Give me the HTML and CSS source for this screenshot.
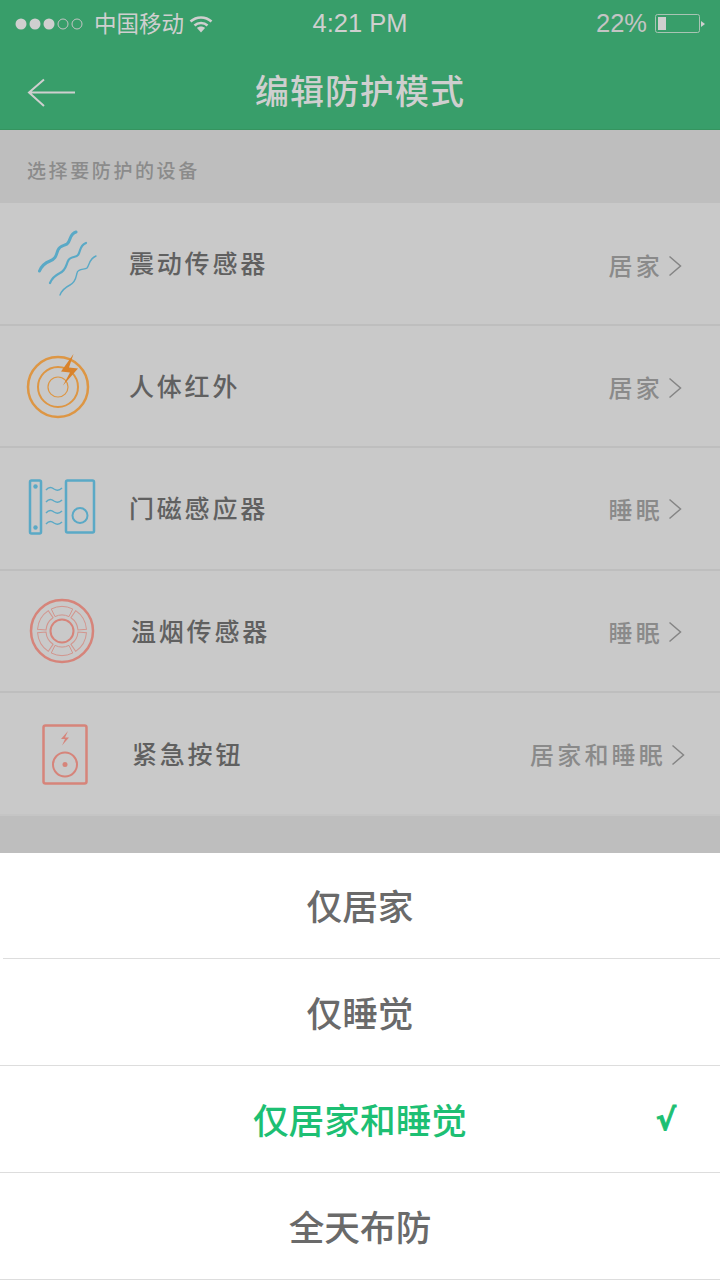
FILE: index.html

```html
<!DOCTYPE html>
<html lang="zh">
<head>
    <meta charset="UTF-8">
    <title>编辑防护模式</title>
    <link rel="stylesheet" href="styles.css">
</head>
<body>
<div class="page">
    <div class="topbar">
        <div class="status">
            <div class="status-left">
                <svg class="signal" width="74" height="12" viewBox="0 0 74 12">
                    <circle cx="6" cy="6" r="5.500" class="dot-on"/>
                    <circle cx="20" cy="6" r="5.500" class="dot-on"/>
                    <circle cx="34" cy="6" r="5.500" class="dot-on"/>
                    <circle cx="48" cy="6" r="5" class="dot-off"/>
                    <circle cx="62" cy="6" r="5" class="dot-off"/>
                </svg>
                <span class="carrier">中国移动</span>
                <svg class="wifi" width="24" height="18" viewBox="0 0 24 18">
                    <path d="M1.500 6.500C7.500 1 16.500 1 22.500 6.500" class="wifi-arc"/>
                    <path d="M5.500 10.500C9 7 15 7 18.500 10.500" class="wifi-arc"/>
                    <path d="M8 13L12 17.500 16 13C14 11 10 11 8 13Z" class="wifi-tip"/>
                </svg>
            </div>
            <div class="clock">4:21 PM</div>
            <div class="status-right">
                <span class="percent">22%</span>
                <svg width="51" height="20" viewBox="0 0 51 20">
                    <rect x="0.500" y="0.500" width="44" height="18" rx="2" class="batt-shell"/>
                    <rect x="3" y="3" width="8" height="13" class="batt-fill"/>
                    <path d="M46 7L50 10 46 13Z" class="batt-fill"/>
                </svg>
            </div>
        </div>
        <div class="navbar">
            <svg class="back" width="50" height="32" viewBox="0 0 50 32">
                <path d="M49 15.500H3M18 2.500L3 15.500 18 29"/>
            </svg>
            <h1 class="title">编辑防护模式</h1>
        </div>
    </div>

    <div class="section-label">选择要防护的设备</div>

    <div class="list">
        <div class="row row-low">
            <svg class="icon" width="80" height="80" viewBox="0 0 80 80">
                <g class="ic-wave">
                    <path d="M19.500 48C22 42 26 39.500 30 38C36 36 36 32 38 27C40 22 44 23 47 21C51 18 49 11 56 9" stroke-width="3"/>
                    <path d="M30 60C32 55 36 52 40 50C46 47 46 42 48 38C50 33 56 35 58 32C61 28 59 23 66 20" stroke-width="2.200"/>
                    <path d="M40 72C42 67 46 64 50 62C56 59 56 54 57 50C58 45 65 47 67 45C70 41 69 36 76 33" stroke-width="1.400"/>
                </g>
            </svg>
            <span class="label">震动传感器</span>
            <span class="value">居家</span>
            <svg class="chevron" width="14" height="22" viewBox="0 0 14 22"><path d="M1.500 1.500L12.500 11 1.500 20.500"/></svg>
        </div>
        <div class="row row-mid">
            <svg class="icon" width="80" height="80" viewBox="0 0 80 80">
                <g class="ic-orange">
                    <circle cx="38" cy="41" r="30" stroke-width="2.500"/>
                    <circle cx="38" cy="41" r="20" stroke-width="2"/>
                    <circle cx="38" cy="41" r="10" stroke-width="1.200"/>
                </g>
                <path class="ic-bolt" d="M53.500 8L41 25.500 50 26.500 43 39.500 58 22.500 49 21.500Z"/>
            </svg>
            <span class="label">人体红外</span>
            <span class="value">居家</span>
            <svg class="chevron" width="14" height="22" viewBox="0 0 14 22"><path d="M1.500 1.500L12.500 11 1.500 20.500"/></svg>
        </div>
        <div class="row">
            <svg class="icon" width="80" height="80" viewBox="0 0 80 80">
                <g class="ic-blue">
                    <rect x="10" y="12.500" width="11" height="53" rx="1.500" stroke-width="2.500"/>
                    <rect x="46" y="12.500" width="28" height="52" rx="1.500" stroke-width="2.500"/>
                    <circle cx="60" cy="47.500" r="7.500" stroke-width="2"/>
                    <path d="M26 22C29 18.500 32 19.500 34 21C37 23 40 22 42 20" stroke-width="1.500"/>
                    <path d="M26 34C29 30.500 32 31.500 34 33C37 35 40 34 42 32" stroke-width="1.500"/>
                    <path d="M26 45C29 41.500 32 42.500 34 44C37 46 40 45 42 43" stroke-width="1.500"/>
                    <path d="M26 56C29 52.500 32 53.500 34 55C37 57 40 56 42 54" stroke-width="1.500"/>
                </g>
                <circle class="ic-blue-dot" cx="15.500" cy="18.500" r="2.200"/>
                <circle class="ic-blue-dot" cx="15.500" cy="59.500" r="2.200"/>
            </svg>
            <span class="label">门磁感应器</span>
            <span class="value">睡眠</span>
            <svg class="chevron" width="14" height="22" viewBox="0 0 14 22"><path d="M1.500 1.500L12.500 11 1.500 20.500"/></svg>
        </div>
        <div class="row row-b">
            <svg class="icon" width="80" height="80" viewBox="0 0 80 80">
                <g class="ic-red" transform="translate(42 40)">
                    <circle r="31" stroke-width="2.500"/>
                    <circle r="11.500" stroke-width="2"/>
                    <g class="ic-seg" stroke-width="1">
                        <path id="seg" d="M-10.740 -22.020A24.500 24.500 0 0 1 10.740 -22.020L7.010 -14.380A16 16 0 0 0 -7.010 -14.380Z"/>
                        <use href="#seg" transform="rotate(60)"/>
                        <use href="#seg" transform="rotate(120)"/>
                        <use href="#seg" transform="rotate(180)"/>
                        <use href="#seg" transform="rotate(240)"/>
                        <use href="#seg" transform="rotate(300)"/>
                    </g>
                </g>
            </svg>
            <span class="label">温烟传感器</span>
            <span class="value">睡眠</span>
            <svg class="chevron" width="14" height="22" viewBox="0 0 14 22"><path d="M1.500 1.500L12.500 11 1.500 20.500"/></svg>
        </div>
        <div class="row row-c">
            <svg class="icon" width="80" height="80" viewBox="0 0 80 80">
                <g class="ic-red">
                    <rect x="23.500" y="11.500" width="43" height="58" rx="2" stroke-width="2.500"/>
                    <circle cx="45" cy="50.500" r="12" stroke-width="2"/>
                </g>
                <circle class="ic-red-fill" cx="45" cy="50.500" r="2.500"/>
                <path class="ic-red-fill" d="M48 17L41 25 45 25 42 31.500 49 23.500 45 23.500Z"/>
            </svg>
            <span class="label">紧急按钮</span>
            <span class="value">居家和睡眠</span>
            <svg class="chevron" width="14" height="22" viewBox="0 0 14 22"><path d="M1.500 1.500L12.500 11 1.500 20.500"/></svg>
        </div>
    </div>

    <div class="sheet">
        <div class="option option-first"><span class="option-text">仅居家</span></div>
        <div class="option"><span class="option-text">仅睡觉</span></div>
        <div class="option option-on"><span class="option-text">仅居家和睡觉</span><span class="tick">√</span></div>
        <div class="option"><span class="option-text">全天布防</span></div>
    </div>
</div>
</body>
</html>
```

FILE: styles.css

```css
* {
    box-sizing: border-box;
}
html, body {
    margin: 0;
    padding: 0;
}
body {
    font-family: "Liberation Sans", "Noto Sans CJK SC", sans-serif;
}
.page {
    width: 720px;
    height: 1280px;
    display: flex;
    flex-direction: column;
    overflow: hidden;
    background: #bebebe;
}

/* top bar */
.topbar {
    height: 130px;
    background: #389e6a;
    color: #cfcfcf;
    border-bottom: 1px solid #35945f;
}
.status {
    height: 47px;
    display: grid;
    grid-template-columns: 1fr auto 1fr;
    align-items: center;
    font-size: 25.500px;
}
.status-left {
    display: flex;
    align-items: center;
    padding-left: 15px;
}
.carrier {
    font-size: 22.500px;
    line-height: 26px;
    margin: 2px 0 0 5px;
}
.wifi {
    margin-left: 5px;
}
.status-right {
    display: flex;
    align-items: center;
    justify-content: flex-end;
    padding-right: 14px;
}
.percent {
    margin-right: 8px;
    color: #c4c4c4;
}
.dot-on {
    fill: #cfcfcf;
}
.dot-off {
    fill: none;
    stroke: #c4c4c4;
    stroke-width: 1;
}
.wifi-arc {
    fill: none;
    stroke: #cfcfcf;
    stroke-width: 2.500;
}
.wifi-tip,
.batt-fill {
    fill: #cfcfcf;
}
.batt-shell {
    fill: none;
    stroke: #a9c4b4;
    stroke-width: 1;
}
.navbar {
    height: 82px;
    display: flex;
    align-items: center;
    justify-content: center;
    position: relative;
}
.back {
    position: absolute;
    left: 26px;
    top: 30px;
}
.back path {
    fill: none;
    stroke: #cfcfcf;
    stroke-width: 2;
}
.title {
    margin: 0;
    padding-top: 2px;
    font-size: 34px;
    font-weight: 500;
    letter-spacing: 1px;
}

/* device list */
.section-label {
    height: 71px;
    padding: 28px 0 0 27px;
    font-size: 19px;
    font-weight: 500;
    line-height: 28px;
    letter-spacing: 2.600px;
    color: #8b8b8b;
}
.list {
    background: #c9c9c9;
    border-top: 2px solid #bebebe;
}
.row {
    height: 122.600px;
    display: flex;
    align-items: center;
    padding: 0 38px 0 20px;
    border-bottom: 2px solid #bebebe;
}
.row:last-child {
    border-bottom-color: #c5c5c5;
}
.icon {
    flex: none;
}
.label {
    margin: -2px 0 0 29px;
    font-size: 25px;
    font-weight: 500;
    letter-spacing: 2.800px;
    color: #606060;
}
.row-b .label {
    margin-left: 31px;
}
.row-c {
    padding-right: 35px;
}
.row-c .label {
    margin-left: 32px;
}
.value {
    margin-left: auto;
    font-size: 24px;
    font-weight: 500;
    letter-spacing: 3.200px;
    color: #8a8a8a;
}
.chevron {
    flex: none;
    margin: 2px 0 0 5px;
}
.row-low .value {
    margin-top: 3px;
}
.row-mid .value {
    margin-top: 1px;
}
.row-low .chevron {
    margin-top: 6px;
}
.row-mid .chevron {
    margin-top: 4px;
}
.chevron path {
    fill: none;
    stroke: #858585;
    stroke-width: 1.500;
}

/* icons */
.ic-wave path {
    fill: none;
    stroke: #5aa9c6;
    stroke-linecap: round;
}
.ic-orange circle {
    fill: none;
    stroke: #dd9644;
}
.ic-bolt {
    fill: #d9822b;
}
.ic-blue rect,
.ic-blue circle,
.ic-blue path {
    fill: none;
    stroke: #5aa9c6;
}
.ic-blue-dot {
    fill: #5aa9c6;
}
.ic-red circle,
.ic-red rect,
.ic-red path {
    fill: none;
    stroke: #d6847a;
}
.ic-red-fill {
    fill: #d6847a;
}
.ic-seg {
    opacity: 0.75;
}

/* bottom sheet */
.sheet {
    margin-top: auto;
    background: #fff;
}
.option {
    height: 107px;
    display: grid;
    grid-template-columns: 1fr auto 1fr;
    align-items: center;
    font-size: 35.700px;
    font-weight: 500;
    color: #6a6a6a;
    border-bottom: 1px solid #ddd;
}
.option-first {
    height: 106px;
    margin-left: 3px;
    padding-right: 3px;
}
.option-text {
    grid-column: 2;
    margin-top: -2px;
}
.option-on {
    color: #1dbf73;
}
.tick {
    justify-self: end;
    padding-right: 44px;
    font-family: "DejaVu Sans", sans-serif;
    font-size: 30px;
    font-weight: 700;
    -webkit-text-stroke: 1px #1dbf73;
}
```
